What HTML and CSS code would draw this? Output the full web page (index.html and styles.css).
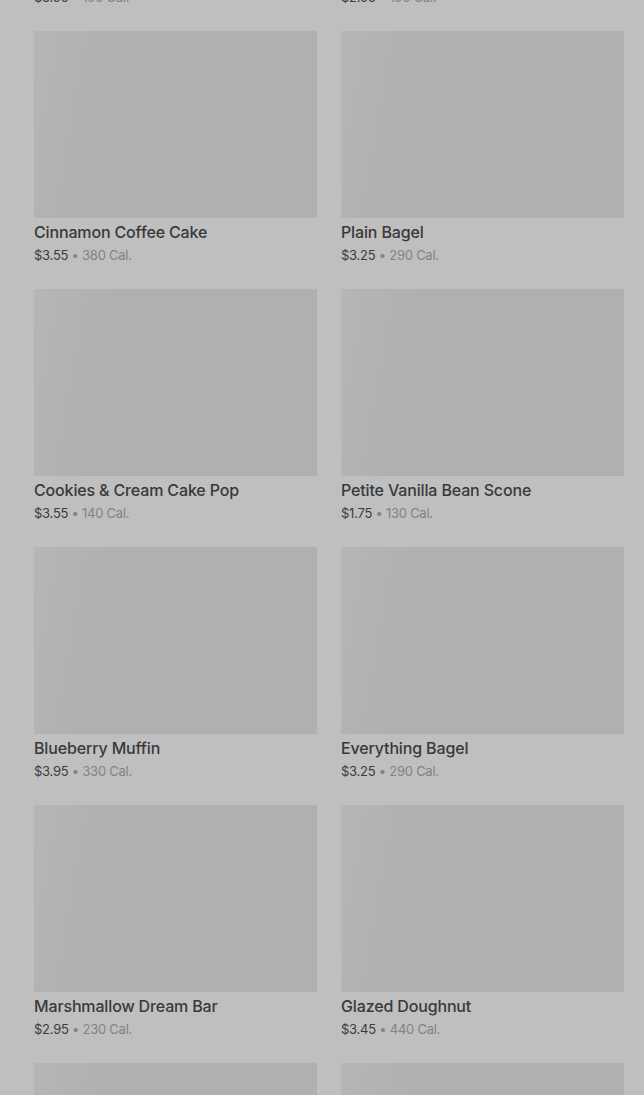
FILE: index.html
```html
<!DOCTYPE html>
<html lang="en">
<head>
    <meta charset="UTF-8">
    <meta name="viewport" content="width=device-width, initial-scale=1.0">
    <title>Bakery</title>
    <link rel="stylesheet" href="styles.css">
</head>
<body>
    <div class="menu">
        <div class="grid">
            <div class="item">
                <div class="thumb"></div>
                <div class="name">Iced Lemon Loaf</div>
                <div class="meta"><span class="price">$3.95</span> • 190 Cal.</div>
            </div>
            <div class="item">
                <div class="thumb"></div>
                <div class="name">Butter Croissant</div>
                <div class="meta"><span class="price">$2.95</span> • 190 Cal.</div>
            </div>

            <div class="item">
                <div class="thumb"></div>
                <div class="name">Cinnamon Coffee Cake</div>
                <div class="meta"><span class="price">$3.55</span> • 380 Cal.</div>
            </div>
            <div class="item">
                <div class="thumb"></div>
                <div class="name">Plain Bagel</div>
                <div class="meta"><span class="price">$3.25</span> • 290 Cal.</div>
            </div>

            <div class="item">
                <div class="thumb"></div>
                <div class="name">Cookies &amp; Cream Cake Pop</div>
                <div class="meta"><span class="price">$3.55</span> • 140 Cal.</div>
            </div>
            <div class="item">
                <div class="thumb"></div>
                <div class="name">Petite Vanilla Bean Scone</div>
                <div class="meta"><span class="price">$1.75</span> • 130 Cal.</div>
            </div>

            <div class="item">
                <div class="thumb"></div>
                <div class="name">Blueberry Muffin</div>
                <div class="meta"><span class="price">$3.95</span> • 330 Cal.</div>
            </div>
            <div class="item">
                <div class="thumb"></div>
                <div class="name">Everything Bagel</div>
                <div class="meta"><span class="price">$3.25</span> • 290 Cal.</div>
            </div>

            <div class="item">
                <div class="thumb"></div>
                <div class="name">Marshmallow Dream Bar</div>
                <div class="meta"><span class="price">$2.95</span> • 230 Cal.</div>
            </div>
            <div class="item">
                <div class="thumb"></div>
                <div class="name">Glazed Doughnut</div>
                <div class="meta"><span class="price">$3.45</span> • 440 Cal.</div>
            </div>

            <div class="item">
                <div class="thumb"></div>
                <div class="name">Chocolate Croissant</div>
                <div class="meta"><span class="price">$3.65</span> • 300 Cal.</div>
            </div>
            <div class="item">
                <div class="thumb"></div>
                <div class="name">Banana Nut Bread</div>
                <div class="meta"><span class="price">$3.45</span> • 420 Cal.</div>
            </div>
        </div>
    </div>
</body>
</html>
```

FILE: styles.css
```css
body {
    margin: 0;
    background-color: #bfbfbf;
    font-family: Inter, "Noto Sans", sans-serif;
    overflow: hidden;
}

.menu {
    padding: 0 20px 0 34px;
}

/* list is scrolled part way down */
.grid {
    margin-top: -227px;
    display: grid;
    grid-template-columns: repeat(2, 283px);
    column-gap: 24px;
    row-gap: 23px;
}

.thumb {
    height: 187px;
    background: linear-gradient(100deg, #b6b6b6 0%, #b3b3b3 12%, #b0b0b0 25%, #b0b0b0 100%);
}

.name {
    margin-top: 2px;
    font-size: 16px;
    line-height: 24px;
    font-weight: 500;
    letter-spacing: -0.15px;
    color: #393939;
    white-space: nowrap;
}

.meta {
    font-size: 13px;
    line-height: 22px;
    letter-spacing: -0.25px;
    color: #838383;
}

.price {
    color: #3c3c3c;
}
```
